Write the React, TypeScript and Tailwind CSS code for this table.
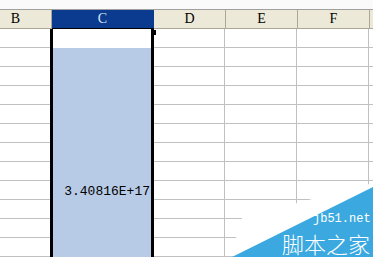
import React from "react";

const rows = Array.from({ length: 12 }, (_, i) => i);

const HeaderCell = ({ label, w, active }: { label: string; w: string; active?: boolean }) => (
  <div
    className={`${w} h-[19px] shrink-0 flex items-center justify-center border-r border-b text-[14px] leading-none font-['Liberation_Serif',serif] ${
      active
        ? "bg-[#0b3b8e] text-[#dce6f7] border-[#0b3b8e] border-b-black"
        : "bg-[#ece9d8] text-black border-[#aca899]"
    }`}
  >
    {label}
  </div>
);

const PlainColumn = ({ w }: { w: string }) => (
  <div className={`${w} shrink-0 flex flex-col`}>
    {rows.map((r) => (
      <div key={r} className="h-[19px] border-r border-b border-[#c0c0c0] bg-white" />
    ))}
  </div>
);

export default function App() {
  return (
    <div className="relative w-[373px] h-[257px] overflow-hidden bg-white">
      <div className="h-[10px] bg-[#fafafa] border-b border-[#a0a0a0]" />
      <div className="flex -ml-[20px]">
        <HeaderCell label="B" w="w-[72px]" />
        <HeaderCell label="C" w="w-[102px]" active />
        <HeaderCell label="D" w="w-[72px]" />
        <HeaderCell label="E" w="w-[72px]" />
        <HeaderCell label="F" w="w-[72px]" />
        <HeaderCell label="" w="w-[72px]" />
      </div>
      <div className="flex -ml-[20px]">
        <PlainColumn w="w-[71px]" />
        <div className="relative w-[104px] -ml-[1px] shrink-0 flex flex-col border-x-[3px] border-black bg-[#b7cbe7]">
          {rows.map((r) => (
            <div
              key={r}
              className={`h-[19px] flex items-end justify-end pr-[1px] pb-[2px] text-[13px] leading-none text-black font-['Liberation_Mono',monospace] ${
                r === 0 ? "bg-white" : ""
              }`}
            >
              {r === 8 ? "3.40816E+17" : ""}
            </div>
          ))}
          <div className="absolute -right-[5px] top-[1px] w-[5px] h-[5px] bg-black" />
        </div>
        <PlainColumn w="w-[71px]" />
        <PlainColumn w="w-[72px]" />
        <PlainColumn w="w-[72px]" />
        <PlainColumn w="w-[72px]" />
      </div>

      <svg className="absolute left-0 top-0" width="373" height="257" viewBox="0 0 373 257">
        <polygon points="234,257 236,238 242,218 312,199 373,183 373,257" fill="#ffffff" />
        <polygon points="232,257 373,187 373,257" fill="#3ba9df" />
      </svg>
      <div className="absolute left-[313px] top-[213px] h-[13px] text-[12px] leading-[13px] text-white font-['Liberation_Mono',monospace]">
        jb51.net
      </div>
      <div className="absolute left-[282px] top-[232px] h-[23px] text-[22px] leading-[23px] text-white font-light font-['Noto_Sans_CJK_SC',sans-serif]">
        脚本之家
      </div>
    </div>
  );
}
